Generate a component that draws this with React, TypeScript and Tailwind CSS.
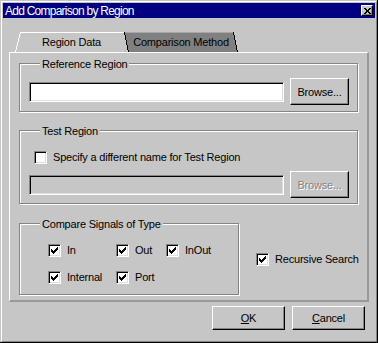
import React from "react";

const CheckMark = () => (
  <svg className="absolute left-[2px] top-[2px]" width="7" height="7" viewBox="0 0 7 7" shapeRendering="crispEdges">
    <path
      d="M6 0h1v1h-1z M5 1h2v1h-2z M0 2h1v1h-1z M4 2h3v1h-3z M0 3h2v1h-2z M3 3h3v1h-3z M0 4h5v1h-5z M1 5h3v1h-3z M2 6h1v1h-1z"
      fill="#000"
    />
  </svg>
);

function Check({ checked }: { checked?: boolean }) {
  return (
    <div className="relative w-[13px] h-[13px] shrink-0 bg-white border border-t-[#848484] border-l-[#848484] border-r-white border-b-white shadow-[inset_1px_1px_0_#000,inset_-1px_-1px_0_#dfdfdf]">
      {checked && <CheckMark />}
    </div>
  );
}

function CheckItem({ label, checked }: { label: string; checked?: boolean }) {
  return (
    <div className="flex items-center gap-[6px]">
      <Check checked={checked} />
      <span className="whitespace-nowrap">{label}</span>
    </div>
  );
}

function Input({ disabled }: { disabled?: boolean }) {
  return (
    <div
      className={
        disabled
          ? "mt-[4px] w-[255px] h-[20px] bg-[#c6c6c6] border border-t-[#848484] border-l-[#848484] border-r-white border-b-white shadow-[inset_1px_1px_0_#000,inset_-1px_-1px_0_#dfdfdf]"
          : "mt-[4px] w-[255px] h-[20px] bg-white border border-t-[#848484] border-l-[#848484] border-r-white border-b-white shadow-[inset_1px_1px_0_#000,inset_-1px_-1px_0_#dfdfdf]"
      }
    />
  );
}

function Button({ children, className, disabled }: { children: React.ReactNode; className: string; disabled?: boolean }) {
  return (
    <div
      className={
        "flex items-center justify-center pt-[1px] border border-t-white border-l-white border-r-black border-b-black shadow-[inset_-1px_-1px_0_#848484] " +
        className +
        (disabled ? " text-[#848484] [text-shadow:1px_1px_0_#fff]" : "")
      }
    >
      <span>{children}</span>
    </div>
  );
}

function Group({ label, className, children }: { label: string; className: string; children: React.ReactNode }) {
  return (
    <div className={"relative border border-[#848484] shadow-[inset_1px_1px_0_#fff,1px_1px_0_#fff] " + className}>
      <span className="absolute left-[20px] top-[-6px] px-[2px] bg-[#c6c6c6] leading-[13px] whitespace-nowrap">{label}</span>
      {children}
    </div>
  );
}

export default function App() {
  return (
    <div className="w-[378px] h-[343px] bg-[#c6c6c6] pt-px pl-px border-r border-b border-black flex font-['Liberation_Sans',Arial,sans-serif] text-[11px] leading-[13px] tracking-[-0.2px] text-black select-none">
      <div className="flex-1 flex flex-col p-px border border-t-white border-l-white border-r-[#848484] border-b-[#848484]">
        {/* Title bar */}
        <div className="h-[15px] shrink-0 bg-[#000080] flex items-start justify-between pl-[2px] pr-[2px]">
          <span className="text-white text-[12px] tracking-[-0.75px] leading-[17px] whitespace-nowrap">Add Comparison by Region</span>
          <div className="self-center w-[12px] h-[11px] flex items-center justify-center bg-[#c6c6c6] border border-t-white border-l-white border-r-black border-b-black shadow-[inset_-1px_-1px_0_#848484]">
            <svg width="7" height="6" viewBox="0 0 7 6" shapeRendering="crispEdges">
              <path
                d="M0 0h2v1h-2z M5 0h2v1h-2z M1 1h2v1h-2z M4 1h2v1h-2z M2 2h3v2h-3z M1 4h2v1h-2z M4 4h2v1h-2z M0 5h2v1h-2z M5 5h2v1h-2z"
                fill="#000"
              />
            </svg>
          </div>
        </div>

        {/* Body */}
        <div className="flex-1 flex flex-col px-[6px] pt-[14px]">
          {/* Tabs */}
          <div className="h-[20px] shrink-0 flex pl-[6px]">
            <div className="relative w-[113px] h-[20px] flex items-center justify-center pt-[1px]">
              <svg className="absolute inset-0" width="113" height="20" viewBox="0 0 113 20" shapeRendering="crispEdges">
                <polygon points="5,0 113,0 113,20 0,20" fill="#c6c6c6" />
                <path d="M0.5 20 L5.5 0.5 L113 0.5" stroke="#ffffff" fill="none" />
              </svg>
              <span className="relative whitespace-nowrap">Region Data</span>
            </div>
            <div className="relative -ml-[4px] w-[114px] h-[20px] flex items-center justify-center pt-[1px]">
              <svg className="absolute inset-0" width="114" height="20" viewBox="0 0 114 20" shapeRendering="crispEdges">
                <polygon points="0,0 109,0 113,20 4,20" fill="#808080" />
                <path d="M1 0.5 H109" stroke="#a8a8a8" fill="none" />
                <path d="M0.5 0 L4.5 20" stroke="#000" fill="none" />
                <path d="M109.5 0 L113.5 20" stroke="#000" fill="none" />
              </svg>
              <span className="relative whitespace-nowrap">Comparison Method</span>
            </div>
          </div>

          {/* Panel */}
          <div className="h-[250px] shrink-0 flex flex-col pt-[10px] pl-[9px] border-t border-l border-t-white border-l-white border-r-2 border-b-2 border-r-[#999999] border-b-[#999999]">
            <Group label="Reference Region" className="w-[339px] h-[49px] shrink-0 pt-[14px] pl-[9px] flex items-start gap-[6px]">
              <Input />
              <Button className="w-[59px] h-[27px]">Browse...</Button>
            </Group>

            <Group label="Test Region" className="mt-[18px] w-[339px] h-[74px] shrink-0 pt-[20px] flex flex-col">
              <div className="pl-[14px]">
                <CheckItem label="Specify a different name for Test Region" />
              </div>
              <div className="mt-[7px] pl-[9px] flex items-start gap-[6px]">
                <Input disabled />
                <Button className="w-[59px] h-[27px]" disabled>
                  Browse...
                </Button>
              </div>
            </Group>

            <div className="mt-[19px] flex items-start">
              <Group label="Compare Signals of Type" className="w-[220px] h-[72px] shrink-0 pt-[20px] pl-[28px]">
                <div className="grid grid-cols-[68px_50px_auto] gap-y-[14px]">
                  <CheckItem label="In" checked />
                  <CheckItem label="Out" checked />
                  <CheckItem label="InOut" checked />
                  <CheckItem label="Internal" checked />
                  <CheckItem label="Port" checked />
                </div>
              </Group>
              <div className="ml-[17px] mt-[30px]">
                <CheckItem label="Recursive Search" checked />
              </div>
            </div>
          </div>

          {/* Buttons */}
          <div className="mt-[4px] flex justify-end gap-[7px] pr-[4px]">
            <Button className="w-[73px] h-[24px]">
              <span className="underline">O</span>K
            </Button>
            <Button className="w-[73px] h-[24px]">
              <span className="underline">C</span>ancel
            </Button>
          </div>
        </div>
      </div>
    </div>
  );
}
